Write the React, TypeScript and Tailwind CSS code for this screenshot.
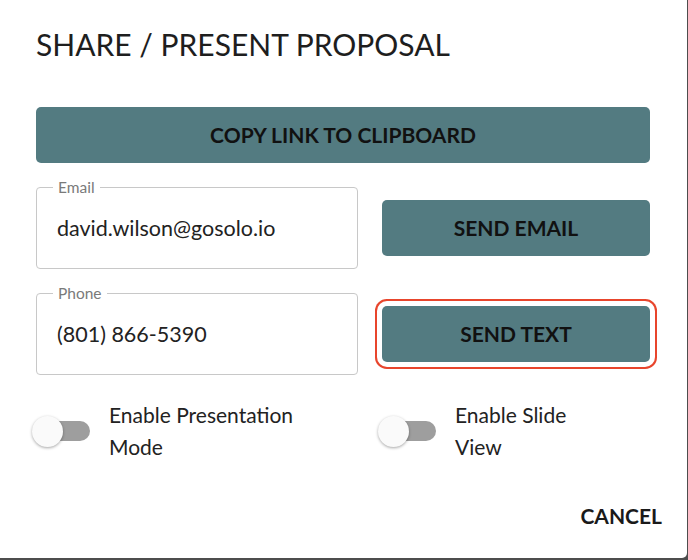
import { useState } from "react";

const font = { fontFamily: "Lato, 'Open Sans', sans-serif" };

// outlined input with the little floating label
const OutlinedField = ({ label, value }: { label: string; value: string }) => {
	return (
		<div className="relative flex h-[82px] w-[322px] items-center rounded-[4px] border border-[#c8c8c8] px-5">
			<span className="absolute left-[16px] top-[-10px] bg-white px-[5px] text-[15.5px] leading-[18px] text-[#7a7a7a]">
				{label}
			</span>
			<span className="text-[21.5px] text-[#222]">{value}</span>
		</div>
	);
};

const Toggle = ({ on, onClick }: { on: boolean; onClick: () => void }) => {
	return (
		<button
			onClick={onClick}
			className="relative -ml-1 flex h-[32px] w-[60px] shrink-0 items-center"
		>
			<span className="absolute left-[7px] h-[20px] w-[51px] rounded-full bg-[#9e9e9e]" />
			<span
				className={`absolute h-[31px] w-[31px] rounded-full bg-[#fafafa] shadow-[0_1px_3px_rgba(0,0,0,0.35)] ${
					on ? "left-[28px]" : "left-0"
				}`}
			/>
		</button>
	);
};

const App = () => {
	// toggles state
	const [presentation, setPresentation] = useState<boolean>(false);
	const [slideView, setSlideView] = useState<boolean>(false);

	return (
		<div className="h-[560px] w-[688px] bg-[#4d4d4d]" style={font}>
			<div className="h-[558px] w-[687px] rounded-br-[5px] bg-white px-9 pt-[26px]">
				<h1 className="text-[30px] leading-[36px] text-[#1e1e1e]">
					SHARE / PRESENT PROPOSAL
				</h1>

				<button className="mt-[45px] flex h-14 w-[614px] items-center justify-center rounded-[5px] bg-[#537b81] text-[21px] font-bold text-[#111]">
					COPY LINK TO CLIPBOARD
				</button>

				<div className="mt-6 flex items-center gap-6">
					<OutlinedField label="Email" value="david.wilson@gosolo.io" />
					<button className="flex h-14 w-[268px] items-center justify-center rounded-[5px] bg-[#537b81] text-[21px] font-bold text-[#111]">
						SEND EMAIL
					</button>
				</div>

				<div className="mt-6 flex items-center gap-6">
					<OutlinedField label="Phone" value="(801) 866-5390" />
					<button className="flex h-14 w-[268px] items-center justify-center rounded-[5px] bg-[#537b81] text-[21px] font-bold text-[#111] ring-2 ring-[#e8452c] ring-offset-[5px]">
						SEND TEXT
					</button>
				</div>

				<div className="mt-6 flex gap-6">
					<div className="flex w-[322px] items-center gap-[17px]">
						<Toggle on={presentation} onClick={() => setPresentation(!presentation)} />
						<span className="w-[200px] text-[21px] leading-[32px] text-[#222]">
							Enable Presentation Mode
						</span>
					</div>
					<div className="flex w-[268px] items-center gap-[17px]">
						<Toggle on={slideView} onClick={() => setSlideView(!slideView)} />
						<span className="w-[150px] text-[21px] leading-[32px] text-[#222]">
							Enable Slide View
						</span>
					</div>
				</div>

				<div className="-mr-[11px] mt-[41px] flex justify-end">
					<button className="text-[21px] font-bold leading-[24px] text-[#1a1a1a]">
						CANCEL
					</button>
				</div>
			</div>
		</div>
	);
};

export default App;
